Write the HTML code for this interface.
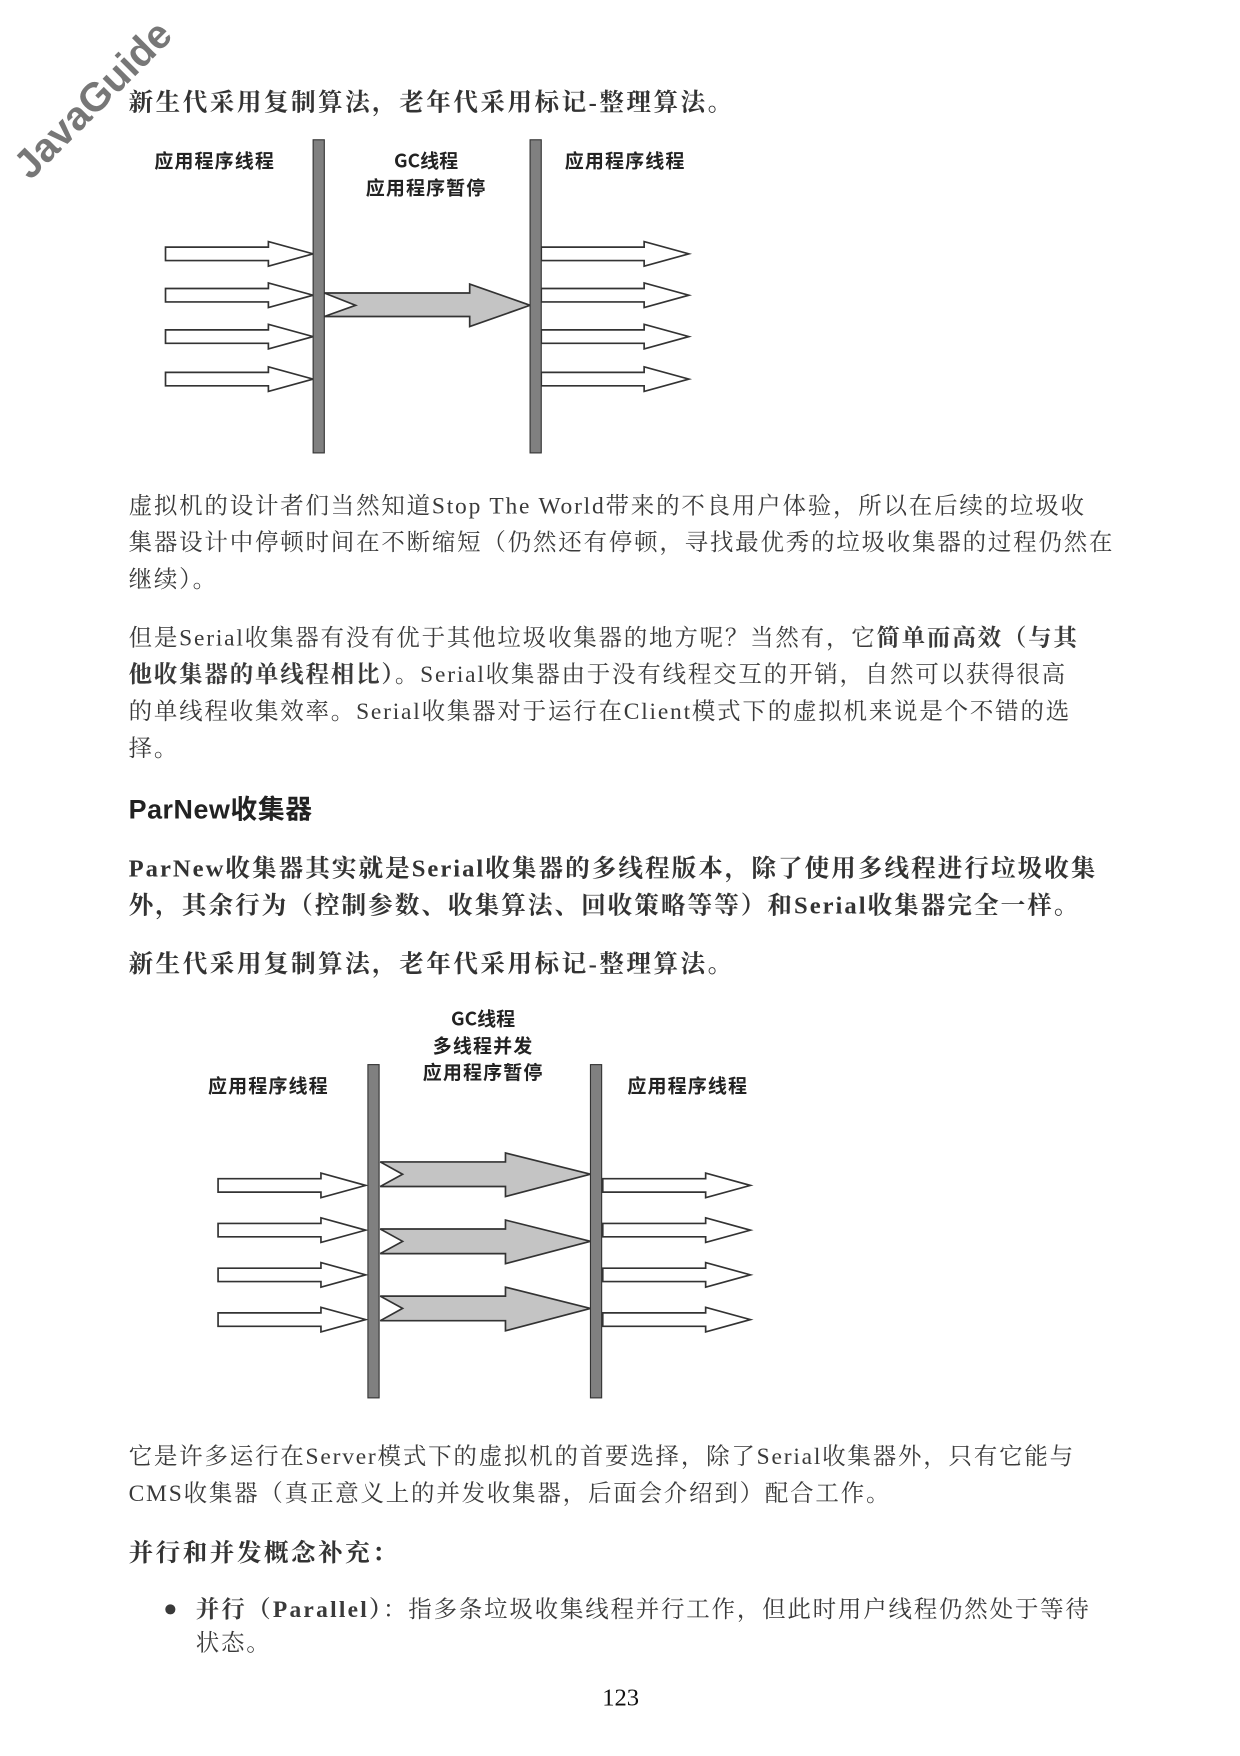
<!DOCTYPE html>
<html><head><meta charset="utf-8"><style>
html,body{margin:0;padding:0;background:#fff;}
body{width:1240px;height:1754px;overflow:hidden;position:relative;}
#w{position:absolute;left:0;top:0;width:1110px;height:1570px;transform:scale(1.1183);transform-origin:0 0;}
.t{position:absolute;left:115px;white-space:nowrap;font-family:"Liberation Serif","Noto Serif CJK SC",serif;color:#3a3a3a;font-size:21px;line-height:33px;letter-spacing:1.6px;}
.b{font-weight:bold;color:#333;}
.bb{font-size:22px;letter-spacing:2.2px;}
.h{font-family:"Liberation Sans","Noto Sans CJK SC",sans-serif;font-weight:bold;font-size:24px;color:#222;letter-spacing:0.5px;}
.wm{position:absolute;left:-8px;top:68px;transform:rotate(-45deg);font-family:"Liberation Sans",sans-serif;font-weight:bold;font-size:36px;color:#777;}
svg{position:absolute;left:0;}
svg text{font-family:"Noto Sans CJK SC",sans-serif;font-size:17px;fill:#222;font-weight:bold;}
</style></head><body><div id="w">
<div class="wm">JavaGuide</div>
<div class="t b bb" style="top:75px">新生代采用复制算法，老年代采用标记-整理算法。</div>

<svg style="top:0" width="1100" height="420">
<defs>
<g id="wa"><polygon points="0,-6 92,-6 92,-11 132,0 92,11 92,6 0,6" fill="#fff" stroke="#333" stroke-width="1.5"/></g>
</defs>
<text x="138" y="150" letter-spacing="1">应用程序线程</text>
<text x="381" y="150" text-anchor="middle">GC线程</text>
<text x="381" y="174" text-anchor="middle" letter-spacing="1">应用程序暂停</text>
<text x="505" y="150" letter-spacing="1">应用程序线程</text>
<use href="#wa" x="148" y="227"/><use href="#wa" x="148" y="264"/><use href="#wa" x="148" y="301"/><use href="#wa" x="148" y="339"/>
<use href="#wa" x="484" y="227"/><use href="#wa" x="484" y="264"/><use href="#wa" x="484" y="301"/><use href="#wa" x="484" y="339"/>
<polygon points="290,262 420,262 420,254 474,273 420,292 420,283 290,283 318,273" fill="#c4c4c4" stroke="#333" stroke-width="1.5"/>
<rect x="280" y="125" width="10" height="280" fill="#808080" stroke="#333"/>
<rect x="474" y="125" width="10" height="280" fill="#808080" stroke="#333"/>
</svg>

<div class="t" style="top:436px">虚拟机的设计者们当然知道Stop The World带来的不良用户体验，所以在后续的垃圾收<br>集器设计中停顿时间在不断缩短（仍然还有停顿，寻找最优秀的垃圾收集器的过程仍然在<br>继续）。</div>
<div class="t" style="top:554px">但是Serial收集器有没有优于其他垃圾收集器的地方呢？当然有，它<b>简单而高效（与其<br>他收集器的单线程相比）</b>。Serial收集器由于没有线程交互的开销，自然可以获得很高<br>的单线程收集效率。Serial收集器对于运行在Client模式下的虚拟机来说是个不错的选<br>择。</div>
<div class="t h" style="top:708px">ParNew收集器</div>
<div class="t b bb" style="top:760px;letter-spacing:1.8px">ParNew收集器其实就是Serial收集器的多线程版本，除了使用多线程进行垃圾收集<br>外，其余行为（控制参数、收集算法、回收策略等等）和Serial收集器完全一样。</div>
<div class="t b bb" style="top:845px">新生代采用复制算法，老年代采用标记-整理算法。</div>

<svg style="top:0" width="1100" height="1270">
<text x="432" y="917" text-anchor="middle">GC线程</text>
<text x="432" y="941" text-anchor="middle" letter-spacing="1">多线程并发</text>
<text x="432" y="965" text-anchor="middle" letter-spacing="1">应用程序暂停</text>
<text x="186" y="977" letter-spacing="1">应用程序线程</text>
<text x="561" y="977" letter-spacing="1">应用程序线程</text>
<use href="#wa" x="195" y="1060"/><use href="#wa" x="195" y="1100"/><use href="#wa" x="195" y="1140"/><use href="#wa" x="195" y="1180"/>
<use href="#wa" x="539" y="1060"/><use href="#wa" x="539" y="1100"/><use href="#wa" x="539" y="1140"/><use href="#wa" x="539" y="1180"/>
<g fill="#c4c4c4" stroke="#333" stroke-width="1.5">
<polygon points="340,1039 452,1039 452,1031 528,1050 452,1070 452,1061 340,1061 360,1050"/>
<polygon points="340,1099 452,1099 452,1091 528,1110 452,1130 452,1121 340,1121 360,1110"/>
<polygon points="340,1159 452,1159 452,1151 528,1170 452,1190 452,1181 340,1181 360,1170"/>
</g>
<rect x="329" y="952" width="10" height="298" fill="#808080" stroke="#333"/>
<rect x="528" y="952" width="10" height="298" fill="#808080" stroke="#333"/>
</svg>

<div class="t" style="top:1286px">它是许多运行在Server模式下的虚拟机的首要选择，除了Serial收集器外，只有它能与<br>CMS收集器（真正意义上的并发收集器，后面会介绍到）配合工作。</div>
<div class="t b bb" style="top:1372px">并行和并发概念补充：</div>
<div class="t" style="top:1424px;left:146px;line-height:28px">●</div>
<div class="t" style="top:1424px;left:175px;line-height:30px"><b style="letter-spacing:2px">并行（Parallel）</b>：指多条垃圾收集线程并行工作，但此时用户线程仍然处于等待<br>状态。</div>
<div class="t" style="top:1501px;left:0;width:1110px;text-align:center;color:#111;font-size:22px;letter-spacing:0">123</div>
</div></body></html>
